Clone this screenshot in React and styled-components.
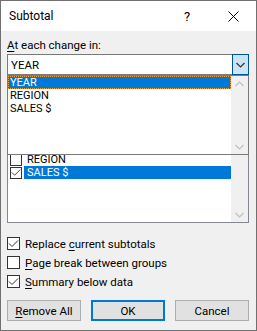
import React from 'react';
import styled, { createGlobalStyle } from 'styled-components';

const Global = createGlobalStyle`
  html, body { margin: 0; padding: 0; background: #fff; }
  body {
    font-family: Roboto, "Noto Sans", "Liberation Sans", sans-serif;
    font-size: 11.5px;
    color: #000;
  }
  * { box-sizing: border-box; }
`;

const Dialog = styled.div`
  width: 257px;
  height: 331px;
  border: 1px solid #707070;
  background: #f0f0f0;
  display: flex;
  flex-direction: column;
`;

const TitleBar = styled.div`
  height: 30px;
  background: #fff;
  display: flex;
  align-items: center;
`;

const Title = styled.div`
  flex: 1;
  padding-left: 8px;
  font-size: 12px;
`;

const TitleButton = styled.div`
  width: 46px;
  height: 30px;
  display: flex;
  align-items: center;
  justify-content: center;
  font-size: 13px;
`;

const Body = styled.div`
  flex: 1;
  display: flex;
  flex-direction: column;
  padding: 6px 7px 0 6px;
`;

const Label = styled.div`
  height: 16px;
  line-height: 16px;
  margin-bottom: 1px;
`;

const U = styled.span`
  text-decoration: underline;
  text-underline-offset: 2px;
`;

const Combo = styled.div`
  position: relative;
  height: 21px;
  border: 1px solid #7a7a7a;
  background: #fff;
  display: flex;
  align-items: center;
`;

const ComboText = styled.div`
  flex: 1;
  padding-left: 3px;
`;

const DropButton = styled.div`
  width: 17px;
  align-self: stretch;
  margin: -1px -1px -1px 0;
  background: #cce4f7;
  border: 1px solid #005499;
  display: flex;
  align-items: center;
  justify-content: center;
`;

const DropList = styled.div`
  position: absolute;
  left: -1px;
  right: -1px;
  top: calc(100% + 1px);
  height: 80px;
  border: 1px solid #7a7a7a;
  background: #fff;
  display: flex;
  z-index: 2;
`;

const Items = styled.div`
  flex: 1;
  display: flex;
  flex-direction: column;
`;

const DropItem = styled.div`
  height: 13px;
  line-height: 13px;
  padding-left: 2px;
  font-size: 11px;
  color: ${(p) => (p.$selected ? '#fff' : '#000')};
  background: ${(p) => (p.$selected ? '#0078d7' : 'transparent')};
  outline: ${(p) => (p.$selected ? '1px dotted #f0a040' : 'none')};
  outline-offset: -1px;
`;

const ScrollBar = styled.div`
  width: 17px;
  background: #f0f0f0;
  display: flex;
  flex-direction: column;
  justify-content: space-between;
  align-items: center;
  padding: 5px 0 4px;
`;

const ListBox = styled.div`
  margin-top: 64px;
  height: 84px;
  border: 1px solid #828790;
  background: #fff;
  display: flex;
`;

const ListRow = styled.div`
  height: 13px;
  display: flex;
  align-items: center;
  padding-left: 2px;
`;

const ListText = styled.div`
  flex: 1;
  height: 13px;
  line-height: 13px;
  font-size: 11px;
  margin-left: 2px;
  padding-left: 3px;
  color: ${(p) => (p.$selected ? '#fff' : '#000')};
  background: ${(p) => (p.$selected ? '#0078d7' : 'transparent')};
`;

const Box = styled.div`
  width: ${(p) => p.$size}px;
  height: ${(p) => p.$size}px;
  border: 1px solid #333;
  background: #fff;
  flex: none;
  display: flex;
  align-items: center;
  justify-content: center;
`;

const Options = styled.div`
  margin-top: 14px;
  display: flex;
  flex-direction: column;
  gap: 6px;
`;

const Option = styled.div`
  height: 13px;
  display: flex;
  align-items: center;
  gap: 5px;
`;

const Buttons = styled.div`
  margin-top: 12px;
  display: grid;
  grid-template-columns: repeat(3, 1fr);
  gap: 10px;
`;

const Button = styled.div`
  height: 21px;
  border: ${(p) => (p.$default ? '2px solid #0078d7' : '1px solid #adadad')};
  background: #e1e1e1;
  display: flex;
  align-items: center;
  justify-content: center;
`;

const Chevron = ({ up, color = '#333' }) => (
  <svg width="9" height="6" viewBox="0 0 9 6">
    <path
      d={up ? 'M0.5 5 L4.5 1 L8.5 5' : 'M0.5 1 L4.5 5 L8.5 1'}
      fill="none"
      stroke={color}
      strokeWidth="1.2"
    />
  </svg>
);

const Check = () => (
  <svg width="11" height="11" viewBox="0 0 11 11">
    <path d="M1 5.5 L4 8.5 L10 2.5" fill="none" stroke="#333" strokeWidth="1" />
  </svg>
);

const CheckBox = ({ checked, size = 13 }) => (
  <Box $size={size}>{checked ? <Check /> : null}</Box>
);

const Close = () => (
  <svg width="11" height="11" viewBox="0 0 11 11">
    <path d="M0.5 0.5 L10.5 10.5 M10.5 0.5 L0.5 10.5" stroke="#000" strokeWidth="1" />
  </svg>
);

export default function App() {
  return (
    <>
      <Global />
      <Dialog>
        <TitleBar>
          <Title>Subtotal</Title>
          <TitleButton>?</TitleButton>
          <TitleButton>
            <Close />
          </TitleButton>
        </TitleBar>
        <Body>
          <Label>
            <U>A</U>t each change in:
          </Label>
          <Combo>
            <ComboText>YEAR</ComboText>
            <DropButton>
              <Chevron color="#333" />
            </DropButton>
            <DropList>
              <Items>
                <DropItem $selected>YEAR</DropItem>
                <DropItem>REGION</DropItem>
                <DropItem>SALES $</DropItem>
              </Items>
              <ScrollBar>
                <Chevron up color="#c0c0c0" />
                <Chevron color="#c0c0c0" />
              </ScrollBar>
            </DropList>
          </Combo>
          <ListBox>
            <Items>
              <ListRow>
                <CheckBox size={12} />
                <ListText>YEAR</ListText>
              </ListRow>
              <ListRow>
                <CheckBox size={12} />
                <ListText>REGION</ListText>
              </ListRow>
              <ListRow>
                <CheckBox size={12} checked />
                <ListText $selected>SALES $</ListText>
              </ListRow>
            </Items>
            <ScrollBar>
              <Chevron up color="#c0c0c0" />
              <Chevron color="#c0c0c0" />
            </ScrollBar>
          </ListBox>
          <Options>
            <Option>
              <CheckBox checked />
              <span>
                Replace <U>c</U>urrent subtotals
              </span>
            </Option>
            <Option>
              <CheckBox />
              <span>
                <U>P</U>age break between groups
              </span>
            </Option>
            <Option>
              <CheckBox checked />
              <span>
                <U>S</U>ummary below data
              </span>
            </Option>
          </Options>
          <Buttons>
            <Button>
              <span>
                <U>R</U>emove All
              </span>
            </Button>
            <Button $default>OK</Button>
            <Button>Cancel</Button>
          </Buttons>
        </Body>
      </Dialog>
    </>
  );
}
